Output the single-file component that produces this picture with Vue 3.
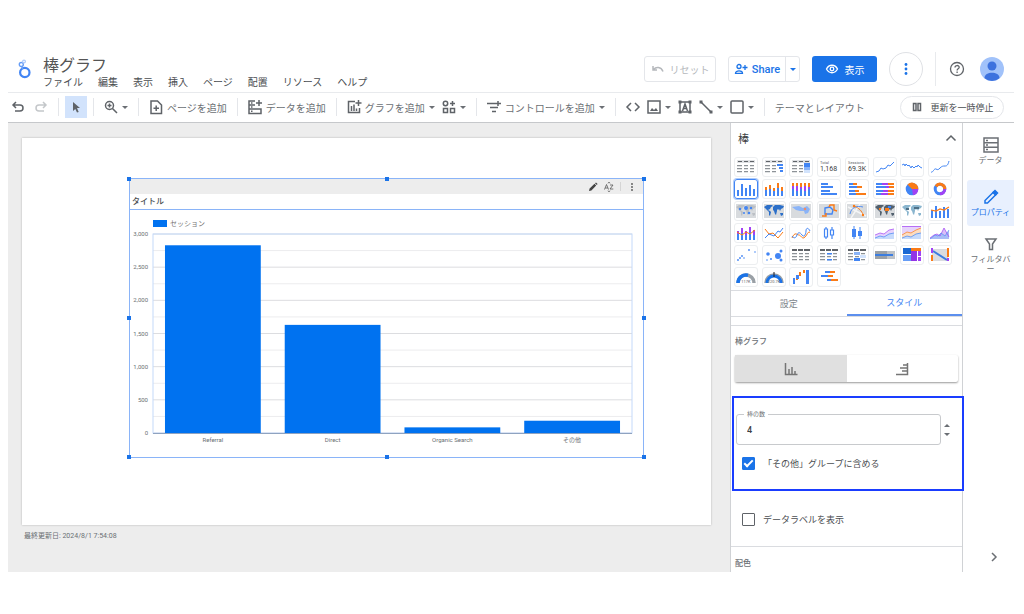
<script setup>
import { ref } from 'vue'

const menus = ['ファイル', '編集', '表示', '挿入', 'ページ', '配置', 'リソース', 'ヘルプ']

const barCount = ref('4')
const groupOthers = ref(true)
const showLabels = ref(false)

const BLUE = '#4285f4'
const ORANGE = '#fa7b17'
const PURPLE = '#a142f4'
const GRAY = '#8d9297'
const PALE = '#dfe1e4'

const rect = (x, y, w, h) => `M${x} ${y}h${w}v${h}h${-w}z`
const fill = (f, ...ds) => ({ f, d: ds.join('') })
const line = (s, d, w = 1) => ({ s, d, w })
const circle = (x, y, r) => `M${x - r} ${y}a${r} ${r} 0 1 0 ${2 * r} 0a${r} ${r} 0 1 0 ${-2 * r} 0z`
const cols = (color, list) => fill(color, ...list.map(([x, y, h]) => rect(x, y, 2, h)))
const rows = (color, list) => fill(color, ...list.map(([x, y, w]) => rect(x, y, w, 2)))

const world =
  'M1 5l3-2 5 0 1 1-2 1-1 2-2 1 2 1 1 1-1 4-1-1 0-3-2-2-2-2zM10 5l2-2 5 0 4 1-1 2-2 1-1 2-1-2-1 1-1-1 0 2-1 4-1-1-1-3-1-1zM17 11l3 0 0 2-2 1z'
const tableBg = fill(PALE, rect(2, 2, 18, 3))
const tableHead = fill('#5f6368', rect(3, 3, 4, 1), rect(9, 3, 4, 1), rect(15, 3, 4, 1))
const pivotHead = fill('#5f6368', rect(2, 3, 5, 2), rect(8, 3, 5, 2), rect(14, 3, 6, 2))
const tableCells = fill(
  GRAY,
  ...[7, 10, 13].flatMap((y) => [rect(2, y, 5, 1.3), rect(9, y, 4, 1.3), rect(15, y, 4, 1.3)])
)
const ground = fill('#d8dbde', rect(1, 2, 20, 14))

const tiles = [
  { name: '表', shapes: [tableBg, tableHead, tableCells] },
  { name: '棒付き表', shapes: [tableBg, tableHead, tableCells, fill('#fff', rect(13, 6, 8, 9)), fill(BLUE, rect(14, 6, 6, 2), rect(16, 9, 4, 2), rect(17, 12, 3, 2))] },
  { name: 'ヒートマップ付き表', shapes: [tableBg, tableHead, tableCells, fill('#4285f4', rect(14, 5, 6, 4)), fill('#8ab4f8', rect(14, 9, 6, 3)), fill('#d2e3fc', rect(14, 12, 6, 3))] },
  { name: 'スコアカード', score: ['Total', '1,168'], shapes: [] },
  { name: 'スコアカード（短縮）', score: ['Sessions', '69.3K'], shapes: [] },
  { name: '時系列', shapes: [line(BLUE, 'M2 14l3-1 2-3 2 1 3-1 2-3 2 1 4-4')] },
  { name: 'スパークライン', shapes: [line(BLUE, 'M1 7l2-1 1 2 1-2 2 2 1-1 2 3 1-2 2 2 2-2 1 1 1-2 2 2 2 1')] },
  { name: '平滑時系列', shapes: [line(BLUE, 'M2 14c2 1 3-4 5-3s2 1 4-1 3-2 5-2 3-1 4-5')] },
  { name: '縦棒', selected: true, shapes: [cols(BLUE, [[2, 10, 6], [6, 4, 12], [10, 8, 8], [14, 5, 11], [18, 9, 7]])] },
  { name: '積み上げ縦棒', shapes: [cols(BLUE, [[2, 10, 6], [6, 9, 7], [10, 11, 5], [14, 8, 8], [18, 11, 5]]), cols(ORANGE, [[2, 7, 3], [6, 5, 4], [10, 8, 3], [14, 3, 5], [18, 7, 4]])] },
  { name: '100% 積み上げ縦棒', shapes: [cols(BLUE, [[2, 9, 7], [6, 11, 5], [10, 9, 7], [14, 11, 5], [18, 9, 7]]), cols(PURPLE, [[2, 6, 3], [6, 6, 5], [10, 7, 2], [14, 6, 5], [18, 7, 2]]), cols(ORANGE, [[2, 3, 3], [6, 3, 3], [10, 3, 4], [14, 3, 3], [18, 3, 4]])] },
  { name: '横棒', shapes: [rows(BLUE, [[3, 3, 7], [3, 6, 12], [3, 10, 9], [3, 13, 16]])] },
  { name: '積み上げ横棒', shapes: [rows(BLUE, [[3, 3, 4], [3, 6, 8], [3, 10, 6], [3, 13, 7]]), rows(ORANGE, [[7, 3, 4], [11, 6, 5], [9, 10, 4], [10, 13, 10]])] },
  { name: '100% 積み上げ横棒', shapes: [rows(BLUE, [[2, 3, 6], [2, 6, 10], [2, 10, 7], [2, 13, 5]]), rows(PURPLE, [[8, 3, 6], [12, 6, 3], [9, 10, 5], [7, 13, 7]]), rows(ORANGE, [[14, 3, 6], [15, 6, 5], [14, 10, 6], [14, 13, 6]])] },
  { name: '円', shapes: [fill(BLUE, circle(11, 9, 6.3)), fill(ORANGE, 'M11 9L6.500 4.600A6.300 6.300 0 0 1 17.300 9z'), fill(PURPLE, 'M11 9H17.300A6.300 6.300 0 0 1 12 15.200z')] },
  { name: 'ドーナツ', shapes: [line(BLUE, circle(11, 9, 4.8), 3), line(ORANGE, 'M7 6.300A4.800 4.800 0 0 1 15.800 9', 3), line(PURPLE, 'M15.800 9A4.800 4.800 0 0 1 11 13.800', 3)] },
  { name: 'バブルマップ', shapes: [ground, fill('#bcc0c5', world), fill(BLUE, circle(5, 7, 1.2), circle(11, 6, 2), circle(9, 11, 1), circle(16, 6, 1.2), circle(14, 11, 1.3))] },
  { name: '塗り分けマップ', shapes: [ground, fill('#2b6fc9', world)] },
  { name: 'ヒートマップ', shapes: [ground, fill('#8ab4f8', 'M2 5l7-1 4 2 4-2 3 3-2 4-3 1-1-3-4 0-4-1z'), fill('#f28b62', circle(15, 7, 1.3))] },
  { name: '線付きマップ', shapes: [ground, line(BLUE, 'M7 6l5-1 3 3-1 4-7 0z', 1.4), line(ORANGE, 'M4 14l4 0 0-3M11 5l1-2 4 0 0 5 3 1', 1.4)] },
  { name: '経路マップ', shapes: [ground, line('#f4f5f6', 'M2 5l18 9M5 16l9-14', 1.4), line(BLUE, 'M4 12c1-6 6-9 13-7', 0.9), line(ORANGE, 'M8 4c5 2 8 5 9 9', 0.9), fill(ORANGE, circle(8, 4, 1.2), circle(17, 13, 1.2))] },
  { name: '複合マップ', shapes: [ground, fill('#52616f', world), fill(ORANGE, rect(11, 6, 4, 3), rect(5, 6, 2, 2)), fill(BLUE, rect(14, 4, 3, 2))] },
  { name: '地図', shapes: [fill('#8bb6cf', world), fill('#4e6f86', rect(13, 5, 5, 2), rect(5, 6, 3, 2))] },
  { name: '複合', shapes: [cols(BLUE, [[2, 8, 8], [6, 4, 12], [10, 9, 7], [14, 5, 11], [18, 7, 9]]), line(ORANGE, 'M2 8l5 1 4-2 4 1 5-3', 1.2)] },
  { name: '積み上げ複合', shapes: [cols(BLUE, [[2, 10, 6], [6, 9, 7], [10, 11, 5], [14, 8, 8], [18, 11, 5]]), cols(PURPLE, [[2, 7, 3], [6, 4, 5], [10, 7, 4], [14, 3, 5], [18, 6, 5]]), line(ORANGE, 'M2 8l5 3 4-3 4 2 5-4')] },
  { name: '折れ線', shapes: [line(ORANGE, 'M2 5l4 5 4-1 5 5 5-6'), line(BLUE, 'M2 14l4-4 5 2 4-5 2 1 3-4')] },
  { name: '平滑線', shapes: [line(ORANGE, 'M2 14c3-7 5-3 7-3s3 5 6 2 2-5 5-5'), line(BLUE, 'M2 12c2 3 4 2 5-1s3-3 5 0 4-1 4-4 2-4 4 0')] },
  { name: 'ローソク足', shapes: [line(BLUE, 'M8 3v2M8 13v2M14 3v3M14 11v4M6.500 5h3v8h-3zM12.500 6h3v5h-3z', 1.2)] },
  { name: '箱ひげ', shapes: [line(BLUE, 'M8 2v13M14 3v12', 1), fill(BLUE, rect(6, 5, 4, 8), rect(12, 7, 4, 5))] },
  { name: '面', shapes: [fill('#e6d3fb', 'M1 11l5-2 4 1 5-4 5-1v10h-19z'), fill('#c6dafc', 'M1 14l5-2 4 1 5-3 5-1v6h-19z'), line(PURPLE, 'M1 11l5-2 4 1 5-4 5-1', 0.7), line(BLUE, 'M1 14l5-2 4 1 5-3 5-1', 0.7)] },
  { name: '100% 面', shapes: [fill('#e6d3fb', rect(1, 2, 19, 13)), fill('#fddcc0', 'M1 11l5-3 4 1 5-3 5-2v11h-19z'), fill('#c6dafc', 'M1 14l5-2 4 1 5-3 5-1v6h-19z'), line(PURPLE, 'M1 2.500h19', 0.7), line(ORANGE, 'M1 11l5-3 4 1 5-3 5-2', 0.7), line(BLUE, 'M1 14l5-2 4 1 5-3 5-1', 0.7)] },
  { name: '重ね面', shapes: [fill('#d9bff7', 'M1 14l4-3 3-1 3 2 4-8 5 9v2h-19z'), fill('#a9bdf6', 'M1 15l5-4 3 1 3-3 4 3 4-6v9z'), line(PURPLE, 'M1 14l4-3 3-1 3 2 4-8 5 9', 0.7), line(BLUE, 'M1 15l5-4 3 1 3-3 4 3 4-6', 0.6)] },
  { name: '散布図', shapes: [fill(BLUE, circle(3, 14, 0.9), circle(5, 12, 0.9), circle(7, 10, 0.9), circle(9, 12, 0.8), circle(14, 4, 0.9), circle(20, 6, 0.8))] },
  { name: 'バブル', shapes: [fill(BLUE, circle(5, 8, 1.8), circle(8, 13, 1), circle(15, 10, 3), circle(18, 5, 1.5), circle(18, 14, 1.5), circle(4, 14, 0.8))] },
  { name: 'ピボット', shapes: [pivotHead, tableCells] },
  { name: '棒付きピボット', shapes: [pivotHead, tableCells, fill(BLUE, rect(9, 7, 5, 1.5), rect(9, 13, 5, 1.5))] },
  { name: 'ヒートマップ付きピボット', shapes: [pivotHead, tableCells, fill('#8ab4f8', rect(8, 6, 6, 3)), fill('#d2e3fc', rect(14, 9, 6, 3)), fill(BLUE, rect(8, 12, 6, 3))] },
  { name: 'ブレット', shapes: [fill('#bdc1c6', rect(1, 5, 20, 8)), fill('#9aa0a6', rect(1, 5, 12, 8)), fill('#3b7de0', rect(1, 8, 18, 2))] },
  { name: 'ツリーマップ', shapes: [fill('#1967d2', rect(2, 2, 8, 6)), fill('#669df6', rect(2, 9, 8, 6)), fill(ORANGE, rect(10, 2, 10, 3)), fill('#9334e6', rect(10, 5, 6, 10)), fill('#a142f4', rect(17, 5, 3, 5), rect(17, 11, 3, 4))] },
  { name: 'サンキー', shapes: [fill('#dadce0', rect(3, 3, 16, 12)), line('#3b7de0', 'M4 5L18 14', 2), fill(PURPLE, rect(2, 2, 2, 5)), fill(ORANGE, rect(2, 9, 2, 6), rect(18, 2, 2, 9)), fill(PURPLE, rect(18, 12, 2, 3))] },
  { name: 'ゲージ', gauge: '117K', shapes: [line('#9aa0a6', 'M3 15a8 8 0 0 1 16 0', 3.5), line('#1a73e8', 'M3 15a8 8 0 0 1 10-7.700', 3.5)] },
  { name: '範囲付きゲージ', gauge: '220.7K', shapes: [line('#9aa0a6', 'M2 15a9 9 0 0 1 18 0', 1.5), line('#1a73e8', 'M4 15a7 7 0 0 1 14 0', 3), line('#202124', 'M11 4v5', 1)] },
  { name: 'ウォーターフォール', shapes: [fill(BLUE, rect(3, 10, 2, 6), rect(6, 7, 3, 4), rect(16, 2, 3, 14)), fill(ORANGE, rect(9, 4, 2, 4), rect(13, 2, 2, 3), rect(6, 11, 2, 1))] },
  { name: 'タイムライン', shapes: [rows(BLUE, [[7, 3, 5], [3, 7, 7], [9, 11, 4]]), rows(ORANGE, [[12, 3, 5], [10, 7, 5], [13, 11, 7]])] }
]

const plot = { left: 23, right: 502, top: 24, bottom: 223, max: 3000 }
const yOf = (v) => plot.bottom - ((plot.bottom - plot.top) * v) / plot.max
const grid = Array.from({ length: 13 }, (_, i) => ({ value: i * 250, y: yOf(i * 250), major: i % 2 === 0 }))
const data = [
  { name: 'Referral', value: 2830 },
  { name: 'Direct', value: 1630 },
  { name: 'Organic Search', value: 85 },
  { name: 'その他', value: 185 }
]
const step = (plot.right - plot.left) / data.length
const bars = data.map((d, i) => ({
  ...d,
  x: plot.left + step * i + step * 0.1,
  w: step * 0.8,
  cx: plot.left + step * (i + 0.5),
  y: yOf(d.value)
}))
const handles = ['nw', 'n', 'ne', 'w', 'e', 'sw', 's', 'se']
</script>

<template>
  <div class="app">
    <header class="header">
      <svg class="logo" viewBox="0 0 14 20" aria-hidden="true">
        <circle cx="6.800" cy="13.500" r="4.700" fill="none" stroke="#4285f4" stroke-width="2.200" />
        <circle cx="3.300" cy="5.500" r="2" fill="none" stroke="#669df6" stroke-width="1.400" />
        <circle cx="6" cy="2.500" r="1.400" fill="none" stroke="#aecbfa" stroke-width="1.200" />
        <path d="M3.800 7.500l.8 2.500" stroke="#669df6" stroke-width="1.400" />
      </svg>
      <div class="heading">
        <h1>棒グラフ</h1>
        <nav class="menus">
          <button v-for="m in menus" :key="m" type="button">{{ m }}</button>
        </nav>
      </div>
      <div class="actions">
        <button class="outline reset" type="button" disabled>
          <svg width="14" height="12" viewBox="0 0 14 12"><path d="M2 3v4h4M2.500 6.500C5 3.500 10 3.500 12 8.500" fill="none" stroke="currentColor" stroke-width="1.500" /></svg>
          リセット
        </button>
        <div class="outline share">
          <button class="share-main" type="button">
            <svg width="14" height="12" viewBox="0 0 14 12" fill="none" stroke="currentColor" stroke-width="1.300"><circle cx="5" cy="3.500" r="2" /><path d="M1.500 10.300c0-3.300 7-3.300 7 0zM11 2v5M8.500 4.500h5" /></svg>
            Share
          </button>
          <button class="share-more" type="button" aria-label="共有オプション"><i class="caret"></i></button>
        </div>
        <button class="view" type="button">
          <svg width="14" height="12" viewBox="0 0 14 12" fill="none" stroke="currentColor" stroke-width="1.300"><path d="M1.500 6c2.500-5 8.500-5 11 0c-2.500 5-8.500 5-11 0z" /><circle cx="7" cy="6" r="1.800" /></svg>
          表示
        </button>
        <button class="round" type="button" aria-label="その他の操作">
          <svg width="4" height="14" viewBox="0 0 4 14" fill="currentColor"><circle cx="2" cy="2.500" r="1.400" /><circle cx="2" cy="7" r="1.400" /><circle cx="2" cy="11.500" r="1.400" /></svg>
        </button>
        <div class="account">
          <button class="plain" type="button" aria-label="ヘルプ">
            <svg width="16" height="16" viewBox="0 0 16 16" fill="none" stroke="#5f6368" stroke-width="1.300"><circle cx="8" cy="8" r="6.500" /><path d="M6 6.500c0-2.600 4.200-2.600 4.200-.2c0 1.500-2.100 1.600-2.100 3.200M8.100 10.500v1.400" /></svg>
          </button>
          <button class="plain" type="button" aria-label="アカウント">
            <svg width="24" height="24" viewBox="0 0 24 24"><circle cx="12" cy="12" r="12" fill="#a1c2fa" /><circle cx="12" cy="9" r="4.500" fill="#3d72de" /><path d="M4.500 21.300C4 14 20 14 19.500 21.300A12 12 0 0 1 4.500 21.300z" fill="#3d72de" /></svg>
          </button>
        </div>
      </div>
    </header>

    <div class="toolbar" role="toolbar" aria-label="ツールバー">
      <div class="group history">
        <button type="button" aria-label="元に戻す"><svg viewBox="0 0 14 14"><path d="M5 2L2 5l3 3M2 5h7c4 0 4 6 0 6H4" /></svg></button>
        <button type="button" aria-label="やり直す" disabled><svg viewBox="0 0 14 14"><path d="M9 2l3 3-3 3M12 5H5c-4 0-4 6 0 6h5" /></svg></button>
      </div>
      <div class="group select">
        <button class="pointer" type="button" aria-label="選択"><svg viewBox="0 0 14 14"><path class="solid" d="M4 2l7 6H8l1.700 4-1.700.6L6.300 9 4 11z" /></svg></button>
      </div>
      <div class="group">
        <button type="button" aria-label="ズーム"><svg viewBox="0 0 14 14"><circle cx="5.500" cy="5.500" r="4" /><path d="M8.500 8.500L13 13M3.500 5.500h4M5.500 3.500v4" /></svg><i class="caret"></i></button>
      </div>
      <div class="group">
        <button type="button"><svg viewBox="0 0 14 14"><path d="M8.500 1H2v12.500h10.500V5zM7.200 5.500v5.500M4.500 8.200h5.500" /></svg>ページを追加</button>
      </div>
      <div class="group">
        <button type="button"><svg viewBox="0 0 14 14"><path d="M7 1H1v12.500h12V9H1M7 5H1M3 3h1.500M3 7h1.500M3 11.200h1.500M11 0v6M8 3h6" /></svg>データを追加</button>
      </div>
      <div class="group">
        <button type="button"><svg viewBox="0 0 14 14"><path d="M8 1.500H1.500v11h11V8M4.500 6v5M7 4.500V11M9.500 8.500V11M11.500 0v6M8.500 3h6" /></svg>グラフを追加<i class="caret"></i></button>
        <button type="button" aria-label="コミュニティ ビジュアリゼーション"><svg viewBox="0 0 14 14"><circle cx="3.500" cy="3.500" r="2.200" /><path d="M1.500 8.500h4v4h-4zM8.500 8.500h4v4h-4zM10.500 1v5M8 3.500h5" /></svg><i class="caret"></i></button>
      </div>
      <div class="group">
        <button type="button"><svg viewBox="0 0 14 14"><path d="M0 3.500h8M3 7.500h8M5 11.500h4M11 1v5M8 3.500h6" /></svg>コントロールを追加<i class="caret"></i></button>
      </div>
      <div class="group">
        <button type="button" aria-label="URL の埋め込み"><svg viewBox="0 0 14 14"><path d="M5 3L1 7l4 4M9 3l4 4-4 4" /></svg></button>
        <button type="button" aria-label="画像"><svg viewBox="0 0 14 14"><path d="M1 1h12v12H1z" /><path class="solid" d="M3 11l2-3 2 2 2-2 2 3z" /></svg><i class="caret"></i></button>
        <button type="button" aria-label="テキスト"><svg viewBox="0 0 14 14"><path d="M2 2h10v10H2zM4.500 11L7 4l2.500 7M5.500 8.500h3" /><path class="solid" d="M0.500 0.500h3v3h-3zM10.500 0.500h3v3h-3zM0.500 10.500h3v3h-3zM10.500 10.500h3v3h-3z" /></svg></button>
        <button type="button" aria-label="線"><svg viewBox="0 0 14 14"><path d="M2 2l10 10" /><path class="solid" d="M0.500 0.500h3v3h-3zM10.500 10.500h3v3h-3z" /></svg><i class="caret"></i></button>
        <button type="button" aria-label="図形"><svg viewBox="0 0 14 14"><rect x="1" y="1" width="12" height="12" rx="1" /></svg><i class="caret"></i></button>
      </div>
      <div class="group">
        <button type="button">テーマとレイアウト</button>
      </div>
      <button class="pause" type="button">
        <svg viewBox="0 0 14 14"><path d="M3.500 3.500h2.500v7H3.500zM8 3.500h2.500v7H8z" /></svg>更新を一時停止
      </button>
    </div>

    <div class="body">
      <main class="canvas">
        <div class="page">
          <section class="chart" aria-label="棒グラフ">
            <div class="chart-bar">
              <svg width="10" height="10" viewBox="0 0 10 10"><path d="M1 9l.6-2.400L6.500 1.800l1.700 1.700L3.400 8.400zM7 1.200L8 .4 9.600 2 8.800 2.900z" fill="#444" /></svg>
              <svg width="10" height="10" viewBox="0 0 10 10" fill="none" stroke="#555" stroke-width="0.800"><path d="M.5 7.500L2.500 2.500l2 5M1.300 6h2.500M6 3h3L6 7h3.300M3.800 1.200L5 .3l1.200.9M3.800 8.800L5 9.700l1.200-.9" /></svg>
              <span class="bar-split"></span>
              <svg width="10" height="10" viewBox="0 0 10 10" fill="#555"><circle cx="5" cy="2" r=".9" /><circle cx="5" cy="5" r=".9" /><circle cx="5" cy="8" r=".9" /></svg>
            </div>
            <h2>タイトル</h2>
            <svg class="plot" viewBox="0 0 513 247">
              <rect x="23" y="10" width="14" height="7" fill="#0072f0" />
              <text class="legend" x="40" y="16">セッション</text>
              <g v-for="g in grid" :key="g.value">
                <line :x1="plot.left" :x2="plot.right" :y1="g.y" :y2="g.y" :stroke="g.major ? '#dcdde0' : '#ececee'" />
                <text v-if="g.major" class="tick" x="18" :y="g.y + 2" text-anchor="end">{{ g.value.toLocaleString('en-US') }}</text>
              </g>
              <rect :x="plot.left" :y="plot.top" :width="plot.right - plot.left" :height="plot.bottom - plot.top" fill="none" stroke="#c4d9fa" />
              <g v-for="b in bars" :key="b.name">
                <rect :x="b.x" :y="b.y" :width="b.w" :height="plot.bottom - b.y" fill="#0072f0" />
                <text class="tick" :x="b.cx" y="232" text-anchor="middle">{{ b.name }}</text>
              </g>
              <line :x1="plot.left" :x2="plot.right" :y1="plot.bottom + 0.5" :y2="plot.bottom + 0.5" stroke="#8fa3c0" />
            </svg>
            <i v-for="h in handles" :key="h" class="handle" :class="h"></i>
          </section>
        </div>
        <p class="updated">最終更新日: 2024/8/1 7:54:08</p>
      </main>

      <aside class="panel">
        <div class="panel-head">
          <h2>棒</h2>
          <button class="plain" type="button" aria-label="折りたたむ">
            <svg width="12" height="12" viewBox="0 0 12 12"><path d="M1.500 8.500L6 4l4.500 4.500" fill="none" stroke="#5f6368" stroke-width="1.500" /></svg>
          </button>
        </div>
        <div class="tiles">
          <button v-for="t in tiles" :key="t.name" type="button" class="tile" :class="{ selected: t.selected }" :aria-label="t.name">
            <svg viewBox="0 0 22 18">
              <path v-for="(s, i) in t.shapes" :key="i" :d="s.d" :fill="s.f || 'none'" :stroke="s.s || 'none'" :stroke-width="s.w" />
              <template v-if="t.score">
                <text x="2" y="6" class="mini">{{ t.score[0] }}</text>
                <text x="2" y="13" class="score">{{ t.score[1] }}</text>
              </template>
              <text v-if="t.gauge" x="11" y="15" text-anchor="middle" class="mini">{{ t.gauge }}</text>
            </svg>
          </button>
        </div>
        <div class="tabs" role="tablist">
          <button type="button" role="tab" aria-selected="false">設定</button>
          <button type="button" role="tab" aria-selected="true" class="active">スタイル</button>
        </div>
        <section class="orientation">
          <h3>棒グラフ</h3>
          <div class="toggle">
            <button type="button" class="on" aria-label="縦棒グラフ" aria-pressed="true">
              <svg width="14" height="14" viewBox="0 0 14 14"><path d="M1.500 1v11.500H13.500M5 7v5M8 5v7M11 9v3" /></svg>
            </button>
            <button type="button" aria-label="横棒グラフ" aria-pressed="false">
              <svg width="14" height="14" viewBox="0 0 14 14"><path d="M12.500 1v11.500H1M8 3h4M5 6h7M7 9h5" /></svg>
            </button>
          </div>
        </section>
        <section class="focus">
          <div class="field-row">
            <div class="field">
              <label for="bar-count">棒の数</label>
              <input id="bar-count" v-model="barCount" type="text" inputmode="numeric" />
            </div>
            <div class="spin">
              <button type="button" aria-label="増やす" @click="barCount = String(+barCount + 1)"><i class="caret up"></i></button>
              <button type="button" aria-label="減らす" @click="barCount = String(Math.max(1, +barCount - 1))"><i class="caret"></i></button>
            </div>
          </div>
          <label class="check"><input v-model="groupOthers" type="checkbox" />「その他」グループに含める</label>
        </section>
        <section class="labels">
          <label class="check"><input v-model="showLabels" type="checkbox" />データラベルを表示</label>
        </section>
        <section class="colors"><h3>配色</h3></section>
      </aside>

      <nav class="rail">
        <button type="button">
          <svg width="16" height="16" viewBox="0 0 16 16"><path d="M1 1h14v14H1zM1 5.700h14M1 10.300h14M3 3.400h2M3 8h2M3 12.600h2" /></svg>
          データ
        </button>
        <button type="button" class="active">
          <svg width="16" height="16" viewBox="0 0 16 16"><path d="M2 14v-2.500L10.500 3 13 5.500 4.500 14z" /><path d="M10 3.500L12 1.500 14.500 4 12.500 6z" fill="currentColor" /></svg>
          プロパティ
        </button>
        <button type="button">
          <svg width="16" height="16" viewBox="0 0 16 16"><path d="M3 3h10L9.500 8v5.500h-3V8z" /></svg>
          フィルタバー
        </button>
        <button type="button" class="collapse" aria-label="パネルを閉じる">
          <svg width="12" height="12" viewBox="0 0 12 12"><path d="M4 2l4 4-4 4" /></svg>
        </button>
      </nav>
    </div>
  </div>
</template>

<style>
body {
  background: #fff;
}
</style>

<style scoped>
.app {
  box-sizing: border-box;
  min-height: 100vh;
  padding: 48px 10px 42px 8px;
  display: flex;
  flex-direction: column;
  font-family: Roboto, 'Noto Sans CJK JP', sans-serif;
  color: #6b6f74;
}
.app *,
.app *::before {
  box-sizing: border-box;
}
button {
  font: inherit;
  color: inherit;
  background: none;
  border: 0;
  padding: 0;
  margin: 0;
  display: flex;
  align-items: center;
  justify-content: center;
  white-space: nowrap;
}
h1,
h2,
h3,
p {
  margin: 0;
  font-weight: 400;
}
svg {
  display: block;
  flex: none;
}
.caret {
  border: 3px solid transparent;
  border-top-color: currentColor;
  border-bottom-width: 0;
}
.caret.up {
  border-top-width: 0;
  border-bottom: 3px solid currentColor;
}

.header {
  display: flex;
  align-items: center;
  height: 45px;
  padding-bottom: 2px;
  border-bottom: 1px solid #e8eaed;
}
.logo {
  width: 14px;
  height: 20px;
  margin: 0 11px 0 10px;
}
.heading h1 {
  font-size: 16px;
  line-height: 20px;
  margin-top: 8px;
  color: #555;
}
.menus {
  display: flex;
  gap: 15px;
  font-size: 10px;
  line-height: 14px;
  color: #4a4d51;
}
.actions {
  margin-left: auto;
  display: flex;
  align-items: center;
  gap: 12px;
  font-size: 10px;
}
.outline {
  height: 26px;
  border: 1px solid #e4e6ea;
  border-radius: 3px;
}
.reset {
  gap: 5px;
  width: 72px;
  color: #b5b8bc;
}
.share {
  display: flex;
  width: 72px;
  color: #1a73e8;
}
.share-main {
  flex: 1;
  gap: 4px;
  font-size: 11px;
  font-weight: 500;
}
.share-more {
  width: 14px;
  border-left: 1px solid #e4e6ea;
}
.view {
  width: 65px;
  height: 26px;
  gap: 6px;
  border-radius: 3px;
  background: #1a73e8;
  color: #fff;
}
.round {
  width: 34px;
  height: 34px;
  border: 1px solid #dfe1e5;
  border-radius: 50%;
  color: #1a73e8;
}
.account {
  display: flex;
  align-items: center;
  gap: 15px;
  height: 34px;
  padding: 0 10px 0 13px;
  border-left: 1px solid #e8eaed;
}

.toolbar {
  display: flex;
  align-items: center;
  height: 30px;
  padding-bottom: 1px;
  border-bottom: 1px solid #c6c8cb;
  font-size: 10px;
}
.group {
  display: flex;
  align-items: center;
  gap: 7px;
  height: 18px;
  padding: 0 10px;
  border-left: 1px solid #e4e6ea;
}
.toolbar button {
  gap: 4px;
}
.toolbar svg {
  width: 14px;
  height: 14px;
  overflow: visible;
  fill: none;
  stroke: #5f6368;
  stroke-width: 1.5;
}
.toolbar .solid {
  fill: #5f6368;
  stroke: none;
}
.toolbar button:disabled svg {
  stroke: #c4c7ca;
}
.group.history {
  gap: 9px;
  padding-left: 3px;
  border-left: 0;
}
.group.select {
  padding: 0 6px;
}
.pointer {
  width: 22px;
  height: 22px;
  background: #d2e3fc;
}
.toolbar .pause {
  margin-left: auto;
  margin-right: 10px;
  width: 104px;
  height: 23px;
  gap: 6px;
  border: 1px solid #e4e6ea;
  border-radius: 12px;
  font-size: 9px;
  color: #4a4d51;
}

.body {
  flex: 1;
  display: grid;
  grid-template-columns: minmax(0, 1fr) 233px 51px;
}
.canvas {
  display: flex;
  flex-direction: column;
  padding: 15px 19px 0 14px;
  background: #ededed;
}
.page {
  flex: 1;
  padding: 40px 67px 40px 107px;
  background: #fff;
  box-shadow: 0 0 2px rgba(0, 0, 0, 0.25);
}
.updated {
  height: 47px;
  padding: 5px 2px;
  font-size: 7px;
  line-height: 12px;
}
.chart {
  position: relative;
  border: 1px solid #8ab4f8;
}
.chart-bar {
  display: flex;
  align-items: center;
  justify-content: flex-end;
  gap: 6px;
  height: 15px;
  padding-right: 6px;
  background: #ededed;
}
.bar-split {
  width: 1px;
  height: 9px;
  background: #d5d5d5;
}
.chart h2 {
  height: 16px;
  padding-left: 2px;
  border-bottom: 1px solid #8ab4f8;
  font-size: 8px;
  line-height: 15px;
  font-weight: 500;
  color: #4a4d51;
}
.plot {
  width: 100%;
  height: auto;
}
.legend {
  font-size: 7px;
  fill: #757575;
}
.tick {
  font-size: 6px;
  fill: #6b6f74;
}
.handle {
  position: absolute;
  width: 4px;
  height: 4px;
  margin: -2px;
  background: #1a73e8;
}
.nw, .n, .ne { top: 0; }
.w, .e { top: 50%; }
.sw, .s, .se { top: 100%; }
.nw, .w, .sw { left: -1px; }
.n, .s { left: 50%; }
.ne, .e, .se { left: calc(100% + 1px); }

.panel {
  border-left: 1px solid #d0d2d5;
  border-right: 1px solid #d0d2d5;
  background: #fff;
}
.panel-head {
  display: flex;
  align-items: center;
  justify-content: space-between;
  height: 33px;
  padding: 0 5px 3px 7px;
}
.panel-head h2 {
  font-size: 11px;
  color: #3c4043;
}
.tiles {
  display: grid;
  grid-template-columns: repeat(8, 1fr);
  grid-auto-rows: 22px;
  align-items: center;
  justify-items: center;
  padding: 0 8px 2px 1px;
}
.tile {
  width: 24px;
  height: 20px;
  border: 1px solid #eceef0;
  border-radius: 3px;
}
.tile.selected {
  border: 1px solid #4285f4;
  box-shadow: 0 0 0 1px #aecbfa;
}
.tile svg {
  width: 22px;
  height: 18px;
}
.score {
  font-size: 7px;
  fill: #3c4043;
}
.mini {
  font-size: 4px;
  fill: #5f6368;
}
.tabs {
  display: grid;
  grid-template-columns: 1fr 1fr;
  height: 27px;
  border-top: 1px solid #dadce0;
  border-bottom: 1px solid #dadce0;
  font-size: 9px;
  color: #80868b;
}
.tabs .active {
  color: #4285f4;
  border-bottom: 2px solid #5c8fee;
}
.orientation {
  margin-top: 8px;
  padding: 9px 4px 14px;
  border-top: 1px solid #dadce0;
}
h3 {
  font-size: 8px;
  line-height: 14px;
  font-weight: 500;
}
.toggle {
  display: grid;
  grid-template-columns: 1fr 1fr;
  height: 27px;
  margin-top: 6px;
  border-radius: 2px;
  box-shadow: 0 1px 2px rgba(0, 0, 0, 0.4);
}
.toggle .on {
  background: #e0e0e0;
}
.toggle svg {
  fill: none;
  stroke: #757575;
  stroke-width: 1.5;
}
.focus {
  position: relative;
  margin: 0 -2px 0 1px;
  padding: 16px 0 15px 2px;
  border: 2px solid #1a3dff;
}
.field-row {
  display: flex;
  align-items: center;
  gap: 2px;
  padding-right: 11px;
}
.field {
  position: relative;
  flex: 1;
  height: 31px;
}
.field label {
  position: absolute;
  top: -4px;
  left: 8px;
  padding: 0 3px;
  background: #fff;
  font-size: 6px;
  line-height: 8px;
}
.field input {
  width: 100%;
  height: 100%;
  padding: 0 10px;
  border: 1px solid #c8cacd;
  border-radius: 3px;
  background: none;
  font: 500 9px Roboto, sans-serif;
  color: #3c4043;
}
.spin {
  display: flex;
  flex-direction: column;
  gap: 6px;
}
.spin button {
  width: 8px;
}
.check {
  display: flex;
  align-items: center;
  gap: 8px;
  height: 22px;
  font-size: 9px;
  color: #4a4d51;
}
.check input {
  appearance: none;
  display: grid;
  place-items: center;
  width: 13px;
  height: 13px;
  margin: 0;
  border: 1px solid #5f6368;
  border-radius: 1px;
}
.check input:checked {
  border-color: #1a73e8;
  background: #1a73e8;
}
.check input:checked::before {
  content: '';
  width: 9px;
  height: 5px;
  border: solid #fff;
  border-width: 0 0 2px 2px;
  transform: translateY(-1px) rotate(-45deg);
}
.focus .check {
  margin-top: 7px;
  padding-left: 6px;
}
.labels {
  padding: 17px 11px 16px;
}
.colors {
  padding: 10px 4px 0;
  border-top: 1px solid #dadce0;
}

.rail {
  display: flex;
  flex-direction: column;
  padding-left: 4px;
  gap: 6px;
  font-size: 8px;
  line-height: 10px;
}
.rail button {
  flex-direction: column;
  gap: 3px;
  height: 46px;
  padding: 0 3px;
  white-space: normal;
  line-break: anywhere;
}
.rail button:first-child {
  margin-top: 5px;
}
.rail svg {
  fill: none;
  stroke: currentColor;
  stroke-width: 1.5;
}
.rail .active {
  background: #e8f0fe;
  color: #1a73e8;
  border-radius: 3px 0 0 3px;
}
.rail .collapse {
  margin-top: auto;
  padding-left: 10px;
  height: 30px;
}
</style>
